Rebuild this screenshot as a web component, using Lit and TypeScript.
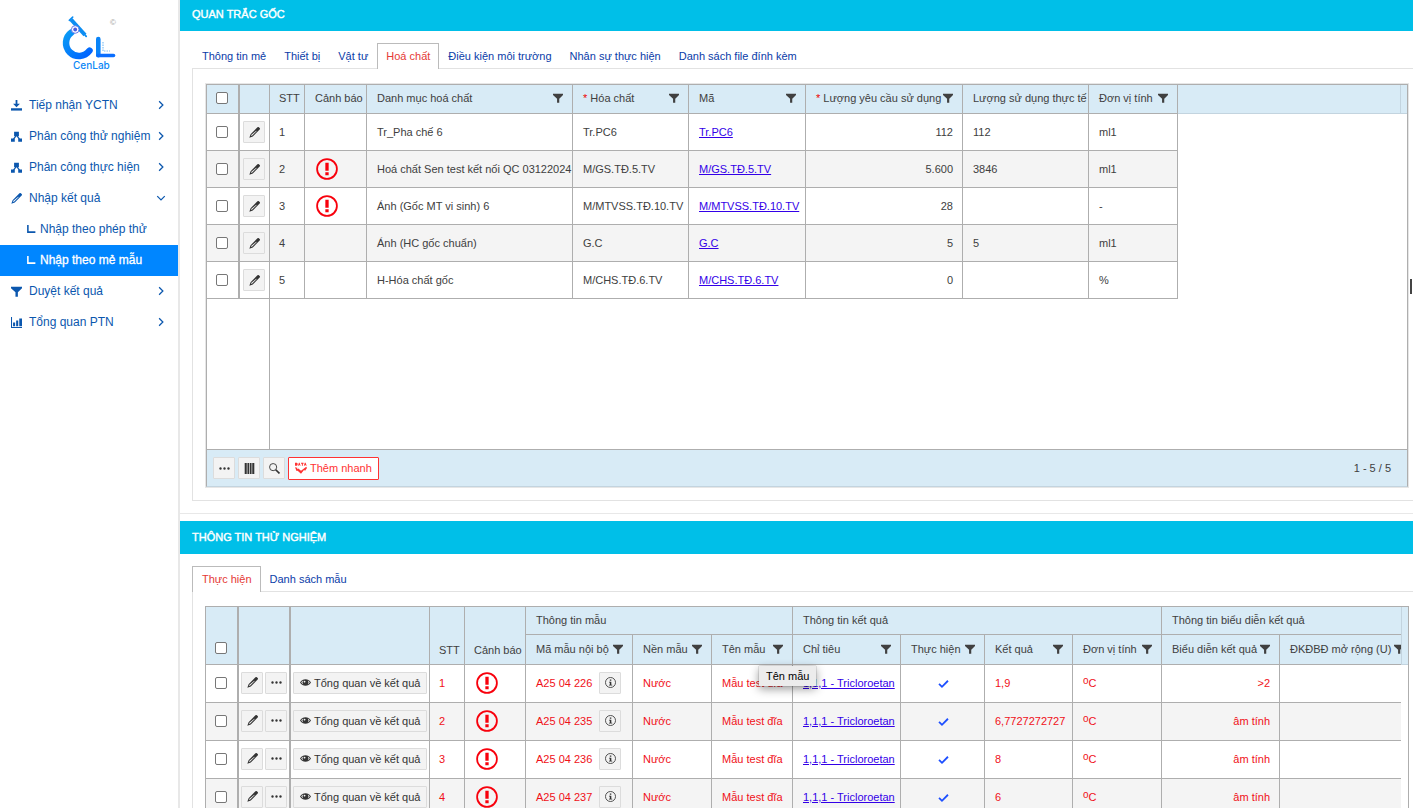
import { LitElement, html, css, svg, nothing, TemplateResult } from "lit";
import { customElement } from "lit/decorators.js";
import { classMap } from "lit/directives/class-map.js";

/* ---------- icons (16 x 16 grid, drawn in currentColor) ---------- */
const shapes: Record<string, TemplateResult> = {
  download: svg`<path d="M6.7 0h2.6v5.5H13L8 10.500 3 5.500h3.700z"/><path d="M0 12h16v3.400H0z"/>`,
  tree: svg`<path d="M4.500 1h7v6.500H10l3 3.500h3v4.500h-5.500V11L8 7.800 5.500 11v4.500H0V11h3l3-3.500H4.500z"/>`,
  pencil: svg`<path fill-rule="evenodd" d="M12.300.5a1.500 1.500 0 0 1 2.100 0l1.100 1.100a1.500 1.500 0 0 1 0 2.100L5.500 13.700.5 15.500 2.300 10.500zM3.500 11.300l-.7 1.900 1.900-.7 6.600-6.600-.6-.6z"/>`,
  filter: svg`<path d="M0 1h16v2.200L10 9v6.500H6.500V9L0 3.200z"/>`,
  chart: svg`<path d="M0 0h1.500v14.500H16V16H0z"/><path d="M3 8h3v5.500H3zM7.500 5h3v8.500h-3zM12 2h4v11.500h-4z"/>`,
  right: svg`<path d="M5 2l6 6-6 6" fill="none" stroke="currentColor" stroke-width="2"/>`,
  down: svg`<path d="M2 5l6 6 6-6" fill="none" stroke="currentColor" stroke-width="2"/>`,
  corner: svg`<path d="M3 1.500v11.500h12" fill="none" stroke="currentColor" stroke-width="2.500"/>`,
  dots: svg`<circle cx="2.200" cy="8" r="1.700"/><circle cx="8" cy="8" r="1.700"/><circle cx="13.800" cy="8" r="1.700"/>`,
  columns: svg`<path d="M1 0h3v16H1zM5 0h2.500v16H5zM8.500 0H11v16H8.500zM12 0h3v16h-3z"/>`,
  search: svg`<circle cx="6" cy="6" r="5.200" fill="none" stroke="currentColor" stroke-width="1.300"/><path d="M9.800 9.800l5.400 5.400" fill="none" stroke="currentColor" stroke-width="2.400"/>`,
  eye: svg`<path fill-rule="evenodd" d="M0 8c2-3.300 5-4.800 8-4.800S14 4.700 16 8c-2 3.300-5 4.800-8 4.800S2 11.300 0 8zm1.700 0c.8 1.200 1.900 2.200 3 2.800a4.300 4.300 0 0 1 0-5.600c-1.100.6-2.200 1.600-3 2.800zm9.600 2.800c1.100-.6 2.200-1.600 3-2.800-.8-1.200-1.900-2.200-3-2.800a4.300 4.300 0 0 1 0 5.600zM6.600 5.300a1.300 1.300 0 1 0 1 2.200 1.300 1.300 0 0 0-1-2.200z"/>`,
  info: svg`<circle cx="8" cy="8" r="7.300" fill="none" stroke="currentColor" stroke-width="1.200"/><path d="M7 3.500h2.200v2H7zM5.800 6.800h3.400v4.500h1.300v1.200H5.800v-1.200H7V8H5.800z"/>`,
  check: svg`<path d="M1.500 8.500l4.300 4.300L14.500 4" fill="none" stroke="currentColor" stroke-width="2.600"/>`,
  alert: svg`<circle cx="8" cy="8" r="7.200" fill="none" stroke="currentColor" stroke-width="1.300"/><path d="M6.800 3.400h2.400v5.800H6.800zM6.800 10.300h2.400v2.200H6.800z"/>`,
  data: svg`<path d="M0 1h2.500l1 1v2l-1 1H0zM4 5l1.200-4h1L7.400 5h-1L6 4H5.300L5 5zM8 1h3.500v1.200h-1V5H9.200V2.200H8zM11.800 5L13 1h1.200L15.500 5h-1.200L14 4h-.8L13 5z"/><path d="M0 7l3 .8v1.700L4.500 8.500 8 11.500 15 6.200 16 8l-2.500 3.500L12 10.800 8 15.500 3.500 11.500 2 12z"/>`,
};
const icon = (name: string, cls = "") =>
  html`<svg class="icon ${cls}" viewBox="0 0 16 16" fill="currentColor" aria-hidden="true">${shapes[name]}</svg>`;

const base = css`
  * { box-sizing: border-box; }
  :host { font-family: "Liberation Sans", Arial, sans-serif; font-size: 11px; line-height: 14px; color: #404040; }
  button { font: inherit; color: inherit; margin: 0; cursor: pointer; }
  .icon { width: 11px; height: 11px; flex: none; display: block; }
  .btn { display: inline-flex; align-items: center; justify-content: center; gap: 3px; height: 22px; min-width: 22px; padding: 0;
    border: 1px solid #dcdcdc; background: #f3f3f3; color: #333; border-radius: 1px; vertical-align: middle; white-space: nowrap; }
`;

/* ---------- sidebar ---------- */
interface Item { label: string; icon: string; arrow?: string; sub?: boolean; active?: boolean; }
const menu: Item[] = [
  { label: "Tiếp nhận YCTN", icon: "download", arrow: "right" },
  { label: "Phân công thử nghiệm", icon: "tree", arrow: "right" },
  { label: "Phân công thực hiện", icon: "tree", arrow: "right" },
  { label: "Nhập kết quả", icon: "pencil", arrow: "down" },
  { label: "Nhập theo phép thử", icon: "corner", sub: true },
  { label: "Nhập theo mẻ mẫu", icon: "corner", sub: true, active: true },
  { label: "Duyệt kết quả", icon: "filter", arrow: "right" },
  { label: "Tổng quan PTN", icon: "chart", arrow: "right" },
];

@customElement("side-menu")
class SideMenu extends LitElement {
  static styles = [base, css`
    :host { display: block; background: #fff; border-right: 2px solid #e8e8e8; }
    .logo { display: block; margin: 10px auto 16px; width: 64px; height: 64px; }
    a { display: flex; align-items: center; gap: 7px; height: 31px; padding: 0 12px 1px 11px; color: #0b57ae; text-decoration: none;
      font-size: 12px; white-space: nowrap; }
    a.sub { padding-left: 26px; gap: 4px; }
    a.sub .icon { width: 10px; height: 10px; }
    a.active { background: #0086ff; color: #fff; -webkit-text-stroke: 0.3px #fff; }
    .label { flex: 1; min-width: 0; }
    .arrow { width: 10px; height: 10px; }
  `];
  render() {
    return html`
      <svg class="logo" viewBox="57 10 64 64" role="img" aria-label="CenLab">
        <defs><linearGradient id="g" x1="0" y1="0" x2="1" y2="1"><stop offset="0" stop-color="#0a9bf5"/><stop offset="1" stop-color="#0062ff"/></linearGradient></defs>
        <path d="M71.500 32.400A13 13 0 1 0 89.500 50.700" fill="none" stroke="url(#g)" stroke-width="6.500" stroke-linecap="round"/>
        <path d="M71 19.500L85 35" stroke="#0c8df2" stroke-width="4"/>
        <path d="M69.300 20.300l3.400-3.200" stroke="#0c8df2" stroke-width="1.600" stroke-linecap="round"/>
        <path d="M85 35l1.200 1.400" stroke="#0c8df2" stroke-width="1.800" stroke-linecap="round"/>
        <circle cx="75.200" cy="29.500" r="3.800" fill="#fff" stroke="#6a7bea"/><circle cx="75.200" cy="29.500" r="1.900" fill="#4a5be0"/>
        <path d="M98.300 39v16.200" stroke="#0a84f8" stroke-width="4.600" stroke-linecap="round"/>
        <path d="M98 55.500h15.500" stroke="#0a6eff" stroke-width="3.600" stroke-linecap="round"/>
        <path d="M103 42v9h7" fill="none" stroke="#7fc0f5" stroke-width="1.200" stroke-dasharray="1.500 1"/>
        <text x="110" y="25" font-size="8" fill="#999">©</text>
        <text x="73" y="69" font-family="Inter, sans-serif" font-size="10" font-weight="500" fill="#0a86f6">CenLab</text>
      </svg>
      <nav>
        ${menu.map((m) => html`<a href="#" class=${classMap({ sub: !!m.sub, active: !!m.active })}>
          ${icon(m.icon)}<span class="label">${m.label}</span>${m.arrow ? icon(m.arrow, "arrow") : nothing}</a>`)}
      </nav>`;
  }
}

/* ---------- data ---------- */
const chemCols = [33, 30, 35, 62, 206, 116, 117, 157, 126, 89];
const chemicals = [
  { warn: false, name: "Tr_Pha chế 6", chem: "Tr.PC6", need: "112", used: "112", unit: "ml1" },
  { warn: true, name: "Hoá chất Sen test kết nối QC 03122024", chem: "M/GS.TĐ.5.TV", need: "5.600", used: "3846", unit: "ml1" },
  { warn: true, name: "Ánh (Gốc MT vi sinh) 6", chem: "M/MTVSS.TĐ.10.TV", need: "28", used: "", unit: "-" },
  { warn: false, name: "Ánh (HC gốc chuẩn)", chem: "G.C", need: "5", used: "5", unit: "ml1" },
  { warn: false, name: "H-Hóa chất gốc", chem: "M/CHS.TĐ.6.TV", need: "0", used: "", unit: "%" },
];
const testCols = [33, 52, 139, 35, 61, 107, 79, 81, 108, 84, 88, 89, 118, 134];
const tests = [
  { code: "A25 04 226", value: "1,9", shown: ">2" },
  { code: "A25 04 235", value: "6,7727272727", shown: "âm tính" },
  { code: "A25 04 236", value: "8", shown: "âm tính" },
  { code: "A25 04 237", value: "6", shown: "âm tính" },
];

@customElement("app-root")
class AppRoot extends LitElement {
  static styles = [base, css`
    :host { display: grid; grid-template-columns: 180px minmax(0, 1fr); height: 100vh; overflow: hidden; background: #fff; }
    main { margin-top: -2px; min-width: 0; }
    h2 { margin: 0; height: 33px; padding: 0 12px; font-size: 11px; line-height: 33px; font-weight: normal; color: #fff; background: #00bfe8;
      -webkit-text-stroke: 0.4px #fff; }
    .card { padding: 12px 0 12px 12px; }
    .card.first { border-bottom: 1px solid #e8e8e8; margin-bottom: 7px; }
    .tabs { display: flex; position: relative; z-index: 1; }
    .tab { height: 26px; padding: 0 8px 1px; border: 1px solid transparent; border-bottom: 0; background: none; color: #0a3ca8; white-space: nowrap; }
    .tab:first-child { padding-left: 9px; }
    .tab.on { background: #fff; border-color: #bbb; color: #e53935; }
    .panel { margin-top: -1px; border: 1px solid #e2e2e2; border-right: 0; padding: 14px 4px 12px 12px; position: relative; }
    .handle { position: absolute; right: 1px; top: 210px; width: 2px; height: 15px; background: #444; }
    .outer { border: 1px solid #e6e6e6; }
    .grid { border: 1px solid #aeaeae; }
    .outer .grid { border-bottom-color: #c3d4df; }
    .view { display: flex; overflow: hidden; }
    .view.tall { height: 364px; }
    .scroll { flex: 1; min-width: 0; overflow: hidden; display: flex; flex-direction: column; }
    .frozen { flex: 1; width: 63px; border-right: 1px solid #aeaeae; }
    .gutter { width: 7px; flex: none; height: 29px; background: #d8ebf6; border-left: 1px solid #c3d4df; border-bottom: 1px solid #c3d4df; }
    .gutter.double { height: 58px; }
    table { border-collapse: separate; border-spacing: 0; table-layout: fixed; width: 100%; flex: none; }
    th, td { border-right: 1px solid #aeaeae; border-bottom: 1px solid #aeaeae; padding: 0 9px 0 10px; text-align: left; font-weight: normal;
      white-space: nowrap; overflow: hidden; }
    th { height: 29px; padding-bottom: 2px; background: #d8ebf6; }
    th.low { vertical-align: bottom; padding-bottom: 7px; }
    th.low input { margin-bottom: 3px; }
    th.group { height: 28px; }
    .double th:not(.group):not(.low) { height: 30px; }
    th.tip { position: relative; overflow: visible; }
    th.fill { border-right: 0; border-bottom-color: #c3d4df; }
    td { height: 37px; }
    .tests td { height: 38px; padding-bottom: 2px; color: #f01018; }
    tbody tr:nth-child(even) td { background: #f4f4f4; }
    tbody tr td.fill, td.fill { background: #fff; border: 0; }
    .thick { border-right-width: 2px; }
    .snug { padding-left: 9px; padding-right: 0; }
    .tools { padding: 0 2px 0 3px; }
    .tests .tools { padding-left: 2px; }
    .num { text-align: right; }
    .mid { text-align: center; }
    .warn { padding-left: 11px; padding-right: 0; }
    .head { display: flex; align-items: center; justify-content: space-between; }
    .head .icon { width: 10px; height: 10px; }
    .req { color: #e00; }
    a { color: #3300e8; text-decoration: underline; }
    input { appearance: none; display: block; margin: 0; width: 12px; height: 12px; border: 1px solid #777; border-radius: 2px; background: #fff; }
    .alert { width: 22px; height: 22px; color: #f8000c; }
    .check { width: 11px; height: 11px; color: #1d4fff; display: inline-block; vertical-align: middle; }
    .pair { display: flex; gap: 2px; }
    .btn.wide { padding: 0 6px; }
    .code { display: flex; align-items: center; justify-content: space-between; }
    .code .btn { margin-right: 2px; }
    sup { font-size: 10px; line-height: 0; vertical-align: 3px; }
    footer { display: flex; align-items: center; gap: 3px; height: 37px; padding: 0 16px 0 6px; border-top: 1px solid #aeaeae; background: #d8ebf6; }
    .btn.add { border-color: #f33; background: #fff; color: #f33; height: 23px; padding: 0 6px; }
    .btn.add .icon { width: 12px; height: 12px; }
    .count { margin-left: auto; }
    .tooltip { position: absolute; left: 47px; top: 31px; z-index: 3; padding: 0 7px; height: 20px; line-height: 20px; background: #ececec; color: #000;
      font-size: 11px; box-shadow: 0 3px 10px rgba(0, 0, 0, 0.4), 0 0 1px rgba(0, 0, 0, 0.5); }
  `];

  private th(label: string, filter = true, required = false) {
    return html`<th scope="col"><div class="head"><span>${required ? html`<span class="req">*</span> ` : nothing}${label}</span>${filter ? icon("filter") : nothing}</div></th>`;
  }
  private cols(list: number[]) {
    return list.map((w) => html`<col style="width:${w}px">`);
  }
  private tabs(labels: string[], on: number) {
    return html`<div class="tabs" role="tablist">${labels.map((t, i) => html`<button role="tab" aria-selected=${i === on ? "true" : "false"} class=${classMap({ tab: true, on: i === on })}>${t}</button>`)}</div>`;
  }
  private edit() {
    return html`<button class="btn" aria-label="Sửa">${icon("pencil")}</button>`;
  }

  render() {
    return html`
      <side-menu></side-menu>
      <main>
        <h2>QUAN TRẮC GỐC</h2>
        <section class="card first">
          ${this.tabs(["Thông tin mẻ", "Thiết bị", "Vật tư", "Hoá chất", "Điều kiện môi trường", "Nhân sự thực hiện", "Danh sách file đính kèm"], 3)}
          <div class="panel">
            <div class="outer"><div class="grid">
              <div class="view tall">
                <div class="scroll">
                  <table>
                    <colgroup>${this.cols(chemCols)}<col></colgroup>
                    <thead><tr>
                      <th class="thick snug"><input type="checkbox" aria-label="Chọn tất cả"></th><th></th>
                      <th class="snug" scope="col">STT</th>${this.th("Cảnh báo", false)}
                      ${this.th("Danh mục hoá chất")}${this.th("Hóa chất", true, true)}${this.th("Mã")}
                      ${this.th("Lượng yêu cầu sử dụng", true, true)}${this.th("Lượng sử dụng thực tế", false)}${this.th("Đơn vị tính")}
                      <th class="fill"></th>
                    </tr></thead>
                    <tbody>${chemicals.map((r, i) => html`<tr>
                      <td class="thick snug"><input type="checkbox" aria-label="Chọn dòng ${i + 1}"></td>
                      <td class="tools">${this.edit()}</td><td class="snug">${i + 1}</td>
                      <td class="warn">${r.warn ? icon("alert", "alert") : nothing}</td>
                      <td>${r.name}</td><td>${r.chem}</td><td><a href="#">${r.chem}</a></td>
                      <td class="num">${r.need}</td><td>${r.used}</td><td>${r.unit}</td><td class="fill"></td>
                    </tr>`)}</tbody>
                  </table>
                  <div class="frozen"></div>
                </div>
                <div class="gutter"></div>
              </div>
              <footer>
                <button class="btn" aria-label="Thêm tuỳ chọn">${icon("dots")}</button>
                <button class="btn" aria-label="Cột">${icon("columns")}</button>
                <button class="btn" aria-label="Tìm kiếm">${icon("search")}</button>
                <button class="btn add">${icon("data")}Thêm nhanh</button>
                <span class="count">1 - 5 / 5</span>
              </footer>
            </div></div>
            <div class="handle"></div>
          </div>
        </section>

        <h2>THÔNG TIN THỬ NGHIỆM</h2>
        <section class="card">
          ${this.tabs(["Thực hiện", "Danh sách mẫu"], 0)}
          <div class="panel">
            <div class="grid tests"><div class="view">
              <div class="scroll">
                <table>
                  <colgroup>${this.cols(testCols)}</colgroup>
                  <thead class="double">
                    <tr>
                      <th rowspan="2" class="low thick snug"><input type="checkbox" aria-label="Chọn tất cả"></th>
                      <th rowspan="2" class="low thick"></th><th rowspan="2" class="low"></th>
                      <th rowspan="2" class="low snug">STT</th><th rowspan="2" class="low snug">Cảnh báo</th>
                      <th colspan="3" class="group">Thông tin mẫu</th>
                      <th colspan="4" class="group">Thông tin kết quả</th>
                      <th colspan="2" class="group">Thông tin biểu diễn kết quả</th>
                    </tr>
                    <tr>
                      ${this.th("Mã mẫu nội bộ")}${this.th("Nền mẫu")}
                      <th class="tip" scope="col"><div class="head"><span>Tên mẫu</span>${icon("filter")}</div><div class="tooltip" role="tooltip">Tên mẫu</div></th>
                      ${this.th("Chỉ tiêu")}${this.th("Thực hiện")}${this.th("Kết quả")}${this.th("Đơn vị tính")}
                      ${this.th("Biểu diễn kết quả")}${this.th("ĐKĐBĐ mở rộng (U)")}
                    </tr>
                  </thead>
                  <tbody>${tests.map((r, i) => html`<tr>
                    <td class="thick snug"><input type="checkbox" aria-label="Chọn dòng ${i + 1}"></td>
                    <td class="thick tools"><div class="pair">${this.edit()}<button class="btn" aria-label="Thêm">${icon("dots")}</button></div></td>
                    <td class="tools"><button class="btn wide">${icon("eye")}Tổng quan về kết quả</button></td>
                    <td class="snug">${i + 1}</td><td class="warn">${icon("alert", "alert")}</td>
                    <td><div class="code">${r.code}<button class="btn" aria-label="Thông tin">${icon("info")}</button></div></td>
                    <td>Nước</td><td>Mẫu test đĩa</td><td><a href="#">1,1,1 - Tricloroetan</a></td>
                    <td class="mid">${icon("check", "check")}</td><td>${r.value}</td><td><sup>o</sup>C</td>
                    <td class="num">${r.shown}</td><td></td>
                  </tr>`)}</tbody>
                </table>
              </div>
              <div class="gutter double"></div>
            </div></div>
          </div>
        </section>
      </main>`;
  }
}
